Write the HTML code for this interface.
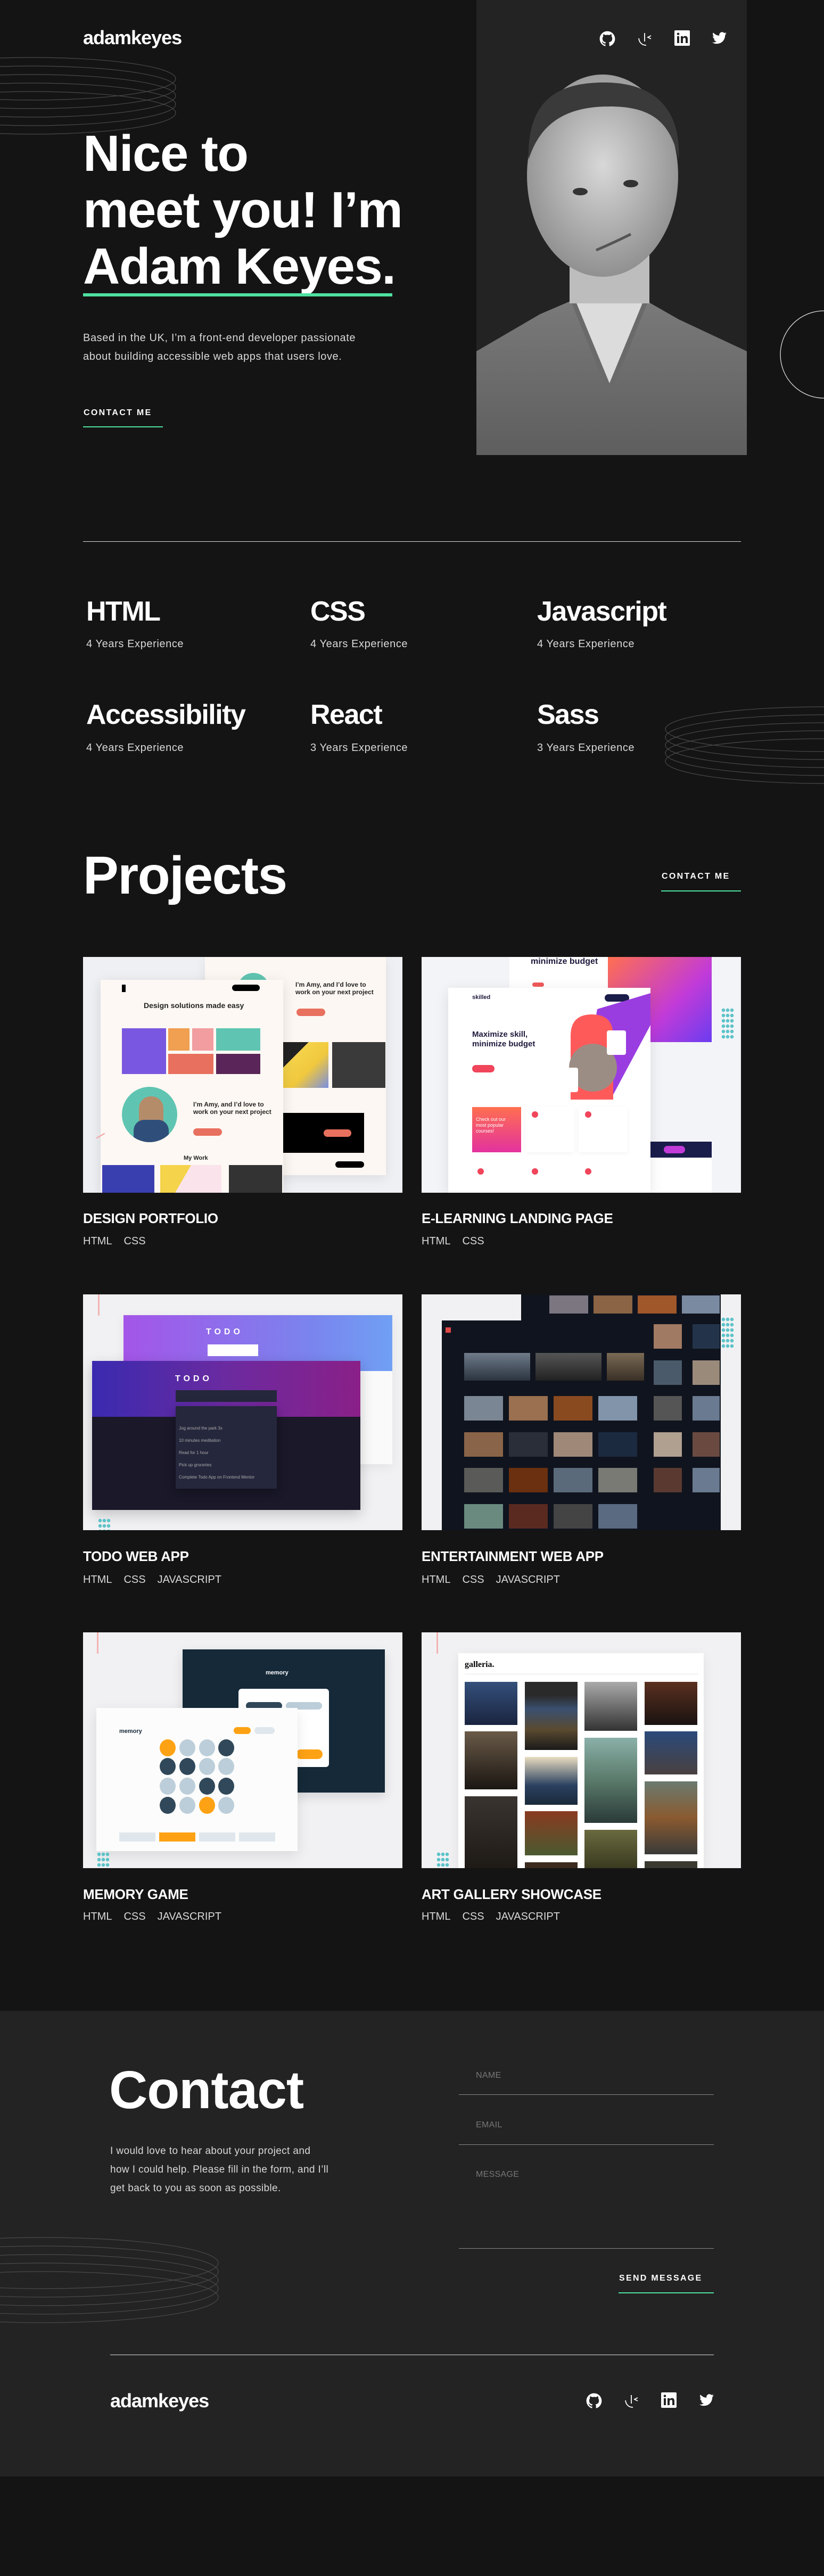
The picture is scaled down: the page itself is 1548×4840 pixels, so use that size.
<!DOCTYPE html>
<html><head><meta charset="utf-8">
<style>
*{margin:0;padding:0;box-sizing:border-box}
html,body{width:1548px;height:4840px;background:#141414;overflow:hidden}
body{font-family:"Liberation Sans",Arial,sans-serif;color:#fff;position:relative}
.a{position:absolute}
.logo{font-weight:700;font-size:36px;letter-spacing:-1px;line-height:1}
.h1{font-weight:700;font-size:96px;line-height:106px;letter-spacing:-1.5px}
.p{font-size:20px;color:#d9d9d9;letter-spacing:.6px}
.cta{font-weight:700;font-size:16px;letter-spacing:2.3px;line-height:1}
.line{height:2px;background:#4ee1a0}
.sk{font-weight:700;font-size:52px;letter-spacing:-1.5px;line-height:1}
.sub{font-size:20px;color:#d9d9d9;letter-spacing:.6px;line-height:1}
.card{position:absolute;width:600px;height:443px;overflow:hidden;background:#eff0f3}
.ct{font-weight:700;font-size:26px;letter-spacing:-.3px;line-height:1}
.tags{font-size:20px;color:#d9d9d9;line-height:1;word-spacing:0}
.tags span{margin-right:22px}
.lbl{font-size:16px;color:#777;letter-spacing:.3px}
.fl{height:1px;background:#888;width:479px;left:862px}
</style></head><body>

<!-- HERO -->
<div class="a" style="left:895px;top:0;width:508px;height:855px;background:#232323;overflow:hidden">
<svg width="508" height="855" viewBox="0 0 508 855">
<defs>
<radialGradient id="face" cx="50%" cy="45%" r="60%"><stop offset="0" stop-color="#d8d8d8"/><stop offset="1" stop-color="#8a8a8a"/></radialGradient>
<linearGradient id="shirt" x1="0" y1="0" x2="0" y2="1"><stop offset="0" stop-color="#7a7a7a"/><stop offset="1" stop-color="#5e5e5e"/></linearGradient>
</defs>
<path d="M0 660 L120 590 L190 560 L310 560 L380 600 L508 660 L508 855 L0 855Z" fill="url(#shirt)"/>
<path d="M180 560 L250 740 L320 560 L300 540 L200 540Z" fill="#dcdcdc"/>
<path d="M175 560 L250 745 L325 560 L318 555 L250 720 L182 555Z" fill="#6a6a6a"/>
<rect x="175" y="440" width="150" height="130" fill="#bdbdbd"/>
<ellipse cx="237" cy="330" rx="142" ry="190" fill="url(#face)"/>
<path d="M98 300 C95 190 150 155 240 155 C330 155 385 200 380 300 C365 230 330 200 250 200 C170 200 120 230 98 300Z" fill="#3a3a3a"/>
<ellipse cx="195" cy="360" rx="14" ry="7" fill="#333"/>
<ellipse cx="290" cy="345" rx="14" ry="7" fill="#333"/>
<path d="M225 470 Q260 455 290 440" stroke="#555" stroke-width="5" fill="none"/>
</svg>
</div>

<div class="a logo" style="left:156px;top:53px">adamkeyes</div>

<!-- icons hero -->
<svg class="a" style="left:1126px;top:58px" width="30" height="30" viewBox="0 0 24 24"><path fill="#fff" d="M12 .5C5.65.5.5 5.65.5 12c0 5.08 3.29 9.39 7.86 10.91.58.1.79-.25.79-.56v-2c-3.2.7-3.87-1.54-3.87-1.54-.52-1.33-1.28-1.68-1.28-1.68-1.04-.71.08-.7.08-.7 1.15.08 1.76 1.19 1.76 1.19 1.03 1.76 2.7 1.25 3.36.96.1-.75.4-1.25.73-1.54-2.55-.29-5.24-1.28-5.24-5.69 0-1.26.45-2.28 1.19-3.09-.12-.29-.52-1.46.11-3.05 0 0 .97-.31 3.17 1.18a11 11 0 0 1 5.77 0c2.2-1.49 3.17-1.18 3.17-1.18.63 1.59.23 2.76.11 3.05.74.81 1.19 1.83 1.19 3.09 0 4.42-2.69 5.39-5.26 5.68.41.36.78 1.06.78 2.14v3.17c0 .31.21.67.8.56C20.21 21.39 23.5 17.08 23.5 12 23.5 5.65 18.35.5 12 .5z"/></svg>
<svg class="a" style="left:1197px;top:58px" width="30" height="30" viewBox="0 0 30 30"><g stroke="#fff" stroke-width="1.8" fill="none"><path d="M14 4V20"/><path d="M26 9L20 12L26 15"/><path d="M3 14C4 22 9 27 17 27"/></g></svg>
<svg class="a" style="left:1267px;top:57px" width="29" height="29" viewBox="0 0 29 29"><rect width="29" height="29" rx="2" fill="#fff"/><rect x="5" y="11" width="4" height="13" fill="#232323"/><circle cx="7" cy="6.8" r="2.3" fill="#232323"/><path d="M12 11h4v2c1-1.6 2.5-2.4 4.4-2.4 3.2 0 4.6 2 4.6 5.6V24h-4v-7c0-1.8-.6-2.9-2.2-2.9-1.7 0-2.8 1.1-2.8 3V24h-4z" fill="#232323"/></svg>
<svg class="a" style="left:1338px;top:60px" width="27" height="23" viewBox="0 0 24 20"><path fill="#fff" d="M24 2.4a9.8 9.8 0 0 1-2.8.8A4.9 4.9 0 0 0 23.3.4a9.8 9.8 0 0 1-3.1 1.2A4.9 4.9 0 0 0 11.8 6 14 14 0 0 1 1.7.9a4.9 4.9 0 0 0 1.5 6.6 4.9 4.9 0 0 1-2.2-.6v.1a4.9 4.9 0 0 0 3.9 4.8 4.9 4.9 0 0 1-2.2.1 4.9 4.9 0 0 0 4.6 3.4A9.9 9.9 0 0 1 0 17.3 13.9 13.9 0 0 0 7.5 19.5c9.1 0 14-7.5 14-14v-.6A10 10 0 0 0 24 2.4z"/></svg>

<!-- rings -->
<svg class="a" style="left:0;top:100px" width="340" height="180" viewBox="0 0 340 180"><g fill="none" stroke="#4a4a4a" stroke-width="1.2">
<ellipse cx="60" cy="48" rx="270" ry="40"/><ellipse cx="60" cy="64" rx="270" ry="40"/><ellipse cx="60" cy="80" rx="270" ry="40"/><ellipse cx="60" cy="96" rx="270" ry="40"/><ellipse cx="60" cy="112" rx="270" ry="40"/></g></svg>
<svg class="a" style="left:1460px;top:580px" width="88" height="172"><ellipse cx="88" cy="86" rx="82" ry="82" fill="none" stroke="#ddd" stroke-width="1.3"/></svg>

<div class="a h1" style="left:156px;top:236px">Nice to<br>meet you! I’m<br>Adam Keyes.</div>
<div class="a" style="left:156px;top:551px;width:581px;height:6px;background:#4ee1a0"></div>
<div class="a p" style="left:156px;top:618px;line-height:35px">Based in the UK, I’m a front-end developer passionate<br>about building accessible web apps that users love.</div>
<div class="a cta" style="left:157px;top:768px">CONTACT ME</div>
<div class="a line" style="left:156px;top:801px;width:150px"></div>

<!-- divider + skills -->
<div class="a" style="left:156px;top:1017px;width:1236px;height:1px;background:#ddd"></div>
<div class="a sk" style="left:162px;top:1123px">HTML</div>
<div class="a sub" style="left:162px;top:1200px">4 Years Experience</div>
<div class="a sk" style="left:583px;top:1123px">CSS</div>
<div class="a sub" style="left:583px;top:1200px">4 Years Experience</div>
<div class="a sk" style="left:1009px;top:1123px">Javascript</div>
<div class="a sub" style="left:1009px;top:1200px">4 Years Experience</div>
<div class="a sk" style="left:162px;top:1317px">Accessibility</div>
<div class="a sub" style="left:162px;top:1395px">4 Years Experience</div>
<div class="a sk" style="left:583px;top:1317px">React</div>
<div class="a sub" style="left:583px;top:1395px">3 Years Experience</div>
<div class="a sk" style="left:1009px;top:1317px">Sass</div>
<div class="a sub" style="left:1009px;top:1395px">3 Years Experience</div>
<svg class="a" style="left:1230px;top:1320px" width="318" height="175"><g fill="none" stroke="#4a4a4a" stroke-width="1.2">
<ellipse cx="320" cy="50" rx="300" ry="42"/><ellipse cx="320" cy="65" rx="300" ry="42"/><ellipse cx="320" cy="80" rx="300" ry="42"/><ellipse cx="320" cy="95" rx="300" ry="42"/><ellipse cx="320" cy="110" rx="300" ry="42"/></g></svg>

<!-- projects header -->
<div class="a" style="left:156px;top:1595px;font-weight:700;font-size:100px;letter-spacing:-1.5px;line-height:1">Projects</div>
<div class="a cta" style="left:1243px;top:1639px">CONTACT ME</div>
<div class="a line" style="left:1242px;top:1673px;width:150px"></div>

<!-- CARD 1 design portfolio -->
<div class="card" style="left:156px;top:1798px">
 <div class="a" style="left:229px;top:0;width:340px;height:410px;background:#fcf7f2;box-shadow:0 6px 20px rgba(0,0,0,.08)"></div>
 <div class="a" style="left:290px;top:30px;width:60px;height:40px;border-radius:30px 30px 0 0;background:#5fc5b2"></div>
 <div class="a" style="left:399px;top:45px;font-size:12px;color:#222;font-weight:700;line-height:14px">I’m Amy, and I’d love to<br>work on your next project</div>
 <div class="a" style="left:401px;top:97px;width:54px;height:14px;border-radius:7px;background:#e8705e"></div>
 <div class="a" style="left:371px;top:160px;width:90px;height:86px;background:linear-gradient(135deg,#222 30%,#f5d34a 30%,#f0c83e 60%,#7a8ee0)"></div>
 <div class="a" style="left:468px;top:160px;width:100px;height:86px;background:#3a3a3a"></div>
 <div class="a" style="left:371px;top:293px;width:157px;height:75px;background:#000"></div>
 <div class="a" style="left:452px;top:324px;width:52px;height:14px;border-radius:7px;background:#e8705e"></div>
 <div class="a" style="left:474px;top:384px;width:54px;height:12px;border-radius:6px;background:#000"></div>
 <div class="a" style="left:33px;top:43px;width:343px;height:400px;background:#fdf8f3;box-shadow:0 6px 24px rgba(0,0,0,.12)"></div>
 <div class="a" style="left:73px;top:52px;width:7px;height:14px;background:#000"></div>
 <div class="a" style="left:280px;top:52px;width:52px;height:12px;border-radius:6px;background:#000"></div>
 <div class="a" style="left:114px;top:83px;font-size:14px;font-weight:700;color:#222">Design solutions made easy</div>
 <div class="a" style="left:73px;top:134px;width:83px;height:86px;background:#7a57e0"></div>
 <div class="a" style="left:160px;top:134px;width:40px;height:42px;background:#f0a050"></div>
 <div class="a" style="left:205px;top:134px;width:40px;height:42px;background:#f29da0"></div>
 <div class="a" style="left:250px;top:134px;width:83px;height:42px;background:#5fc5b2"></div>
 <div class="a" style="left:160px;top:182px;width:85px;height:38px;background:#e8705e"></div>
 <div class="a" style="left:250px;top:182px;width:83px;height:38px;background:#5a2558"></div>
 <div class="a" style="left:73px;top:244px;width:104px;height:104px;border-radius:50%;background:#5fc5b2;overflow:hidden"><div class="a" style="left:32px;top:18px;width:46px;height:90px;border-radius:22px 22px 0 0;background:#b58c6a"></div><div class="a" style="left:22px;top:62px;width:66px;height:50px;background:#2f4f7a;border-radius:20px 20px 0 0"></div></div>
 <div class="a" style="left:207px;top:270px;font-size:12px;color:#222;font-weight:700;line-height:14px">I’m Amy, and I’d love to<br>work on your next project</div>
 <div class="a" style="left:207px;top:322px;width:54px;height:14px;border-radius:7px;background:#e8705e"></div>
 <div class="a" style="left:189px;top:372px;font-size:11px;font-weight:700;color:#222">My Work</div>
 <div class="a" style="left:36px;top:391px;width:98px;height:52px;background:#3a3fb0"></div>
 <div class="a" style="left:145px;top:391px;width:115px;height:52px;background:linear-gradient(120deg,#f5d34a 40%,#fbe3ec 40%)"></div>
 <div class="a" style="left:274px;top:391px;width:100px;height:52px;background:#333"></div>
 <div class="a" style="left:24px;top:335px;width:18px;height:2px;background:#f3a1a0;transform:rotate(-30deg)"></div>
</div>

<!-- CARD 2 e-learning -->
<div class="card" style="left:792px;top:1798px;background:#f3f4f7">
 <div class="a" style="left:165px;top:0;width:380px;height:60px;background:#fff"></div>
 <div class="a" style="left:205px;top:0;font-size:16px;font-weight:700;color:#1e1a3c">minimize budget</div>
 <div class="a" style="left:208px;top:48px;width:22px;height:8px;background:#f05a5a;border-radius:4px"></div>
 <div class="a" style="left:350px;top:0;width:195px;height:160px;background:linear-gradient(135deg,#ff6f4f,#c23bd8 60%,#6b3cf0)"></div>
 <div class="a" style="left:424px;top:360px;width:121px;height:83px;background:#fff"></div>
 <div class="a" style="left:424px;top:347px;width:121px;height:30px;background:#1a1c4a"></div>
 <div class="a" style="left:455px;top:355px;width:40px;height:14px;border-radius:7px;background:#c23bd8"></div>
 <div class="a" style="left:50px;top:58px;width:380px;height:385px;background:#fff;box-shadow:0 6px 24px rgba(0,0,0,.1)"></div>
 <div class="a" style="left:95px;top:70px;font-size:11px;font-weight:700;color:#1e1a3c">skilled</div>
 <div class="a" style="left:344px;top:70px;width:46px;height:14px;border-radius:7px;background:#1a1c4a"></div>
 <svg class="a" style="left:260px;top:68px" width="170" height="200"><path d="M70 30 L170 0 L170 60 L95 200 L40 200Z" fill="#9a3de0"/><path d="M20 80 Q20 40 60 40 Q100 40 100 80 L100 200 L20 200Z" fill="#ff5a5a"/><circle cx="62" cy="140" r="45" fill="#9c8d84"/><rect x="88" y="70" width="36" height="46" rx="4" fill="#fff"/><rect x="-16" y="140" width="50" height="46" rx="4" fill="#fff"/></svg>
 <div class="a" style="left:95px;top:137px;font-size:15px;font-weight:700;color:#1e1a3c;line-height:18px">Maximize skill,<br>minimize budget</div>
 <div class="a" style="left:95px;top:203px;width:42px;height:14px;border-radius:7px;background:#f0455a"></div>
 <div class="a" style="left:95px;top:282px;width:92px;height:85px;background:linear-gradient(180deg,#ff6f4f,#e3329f)"></div>
 <div class="a" style="left:102px;top:300px;font-size:9px;color:#fff;line-height:11px">Check out our<br>most popular<br>courses!</div>
 <div class="a" style="left:195px;top:282px;width:92px;height:85px;background:#fff;box-shadow:0 2px 8px rgba(0,0,0,.05)"></div>
 <div class="a" style="left:295px;top:282px;width:92px;height:85px;background:#fff;box-shadow:0 2px 8px rgba(0,0,0,.05)"></div>
 <div class="a" style="left:207px;top:290px;width:12px;height:12px;border-radius:50%;background:#f0455a"></div>
 <div class="a" style="left:307px;top:290px;width:12px;height:12px;border-radius:50%;background:#f0455a"></div>
 <div class="a" style="left:105px;top:397px;width:12px;height:12px;border-radius:50%;background:#f0455a"></div>
 <div class="a" style="left:207px;top:397px;width:12px;height:12px;border-radius:50%;background:#f0455a"></div>
 <div class="a" style="left:307px;top:397px;width:12px;height:12px;border-radius:50%;background:#f0455a"></div>
 <div class="a" style="left:563px;top:95px;width:24px;height:60px;background:radial-gradient(circle,#5cc3c9 3px,transparent 3.5px) 0 0/8px 10px"></div>
</div>

<!-- CARD 3 todo -->
<div class="card" style="left:156px;top:2432px;background:#f1f1f3">
 <div class="a" style="left:76px;top:39px;width:505px;height:280px;background:#fafafa;box-shadow:0 6px 20px rgba(0,0,0,.06)"></div>
 <div class="a" style="left:76px;top:39px;width:505px;height:105px;background:linear-gradient(90deg,#a455e8,#7a84ee 70%,#70a0f4)"></div>
 <div class="a" style="left:231px;top:62px;font-size:16px;font-weight:700;letter-spacing:6px;color:#fff">TODO</div>
 <div class="a" style="left:234px;top:94px;width:95px;height:22px;background:#fff"></div>
 <div class="a" style="left:17px;top:125px;width:504px;height:280px;background:#1a1829;box-shadow:0 8px 24px rgba(0,0,0,.2)"></div>
 <div class="a" style="left:17px;top:125px;width:504px;height:105px;background:linear-gradient(90deg,#3a2ab0,#6b2aa0 50%,#8a2088)"></div>
 <div class="a" style="left:173px;top:150px;font-size:16px;font-weight:700;letter-spacing:6px;color:#fff">TODO</div>
 <div class="a" style="left:174px;top:180px;width:190px;height:22px;background:#25273c"></div>
 <div class="a" style="left:174px;top:210px;width:190px;height:155px;background:#25273c;box-shadow:0 6px 18px rgba(0,0,0,.3)"></div>
 <div class="a" style="left:180px;top:240px;font-size:8px;color:#aaa;line-height:23px">Jog around the park 3x<br>10 minutes meditation<br>Read for 1 hour<br>Pick up groceries<br>Complete Todo App on Frontend Mentor</div>
 <div class="a" style="left:28px;top:420px;width:24px;height:30px;background:radial-gradient(circle,#5cc3c9 3px,transparent 3.5px) 0 0/8px 10px"></div>
 <div class="a" style="left:28px;top:0;width:3px;height:40px;background:#f3b4b4"></div>
</div>

<!-- CARD 4 entertainment -->
<div class="card" style="left:792px;top:2432px;background:#f1f1f3">
 <div class="a" style="left:187px;top:0;width:375px;height:60px;background:#10141e"></div>
 <div class="a" style="left:38px;top:49px;width:524px;height:394px;background:#10141e"></div>
 <div class="a" style="left:45px;top:62px;width:10px;height:10px;background:#e04848"></div>
 <div class="a" style="left:80px;top:110px;width:124px;height:52px;background:linear-gradient(#6f7b8a,#2b3440)"></div>
 <div class="a" style="left:214px;top:110px;width:124px;height:52px;background:linear-gradient(#555,#222)"></div>
 <div class="a" style="left:348px;top:110px;width:70px;height:52px;background:linear-gradient(#7a6a55,#3a3026)"></div>
 <svg class="a" style="left:80px;top:0" width="480" height="443">
  <g fill="#6a6660"><rect x="160" y="2" width="73" height="34" fill="#7b7680"/><rect x="243" y="2" width="73" height="34" fill="#8a6444"/><rect x="326" y="2" width="73" height="34" fill="#a0572a"/><rect x="409" y="2" width="73" height="34" fill="#7a8aa0"/>
  <rect x="356" y="56" width="53" height="46" fill="#a07a62"/><rect x="429" y="56" width="53" height="46" fill="#23344a"/>
  <rect x="356" y="124" width="53" height="46" fill="#4a5a6a"/><rect x="429" y="124" width="53" height="46" fill="#9a8a7a"/>
  <rect x="0" y="191" width="73" height="46" fill="#7a8694"/><rect x="84" y="191" width="73" height="46" fill="#9a7050"/><rect x="168" y="191" width="73" height="46" fill="#8a4a20"/><rect x="252" y="191" width="73" height="46" fill="#8294aa"/><rect x="356" y="191" width="53" height="46" fill="#555"/><rect x="429" y="191" width="53" height="46" fill="#6a7a90"/>
  <rect x="0" y="259" width="73" height="46" fill="#8a6448"/><rect x="84" y="259" width="73" height="46" fill="#2a2e38"/><rect x="168" y="259" width="73" height="46" fill="#a08878"/><rect x="252" y="259" width="73" height="46" fill="#1c2a40"/><rect x="356" y="259" width="53" height="46" fill="#b0a090"/><rect x="429" y="259" width="53" height="46" fill="#6a4a40"/>
  <rect x="0" y="326" width="73" height="46" fill="#5a5a58"/><rect x="84" y="326" width="73" height="46" fill="#6a3010"/><rect x="168" y="326" width="73" height="46" fill="#5a6a7a"/><rect x="252" y="326" width="73" height="46" fill="#7a7a74"/><rect x="356" y="326" width="53" height="46" fill="#5a3a30"/><rect x="429" y="326" width="53" height="46" fill="#6a7a90"/>
  <rect x="0" y="394" width="73" height="46" fill="#6a8a80"/><rect x="84" y="394" width="73" height="46" fill="#5a2a20"/><rect x="168" y="394" width="73" height="46" fill="#444"/><rect x="252" y="394" width="73" height="46" fill="#5a6a80"/></g></svg>
 <div class="a" style="left:563px;top:42px;width:24px;height:60px;background:radial-gradient(circle,#5cc3c9 3px,transparent 3.5px) 0 0/8px 10px"></div>
</div>

<!-- CARD 5 memory -->
<div class="card" style="left:156px;top:3067px;background:#f1f1f3">
 <div class="a" style="left:187px;top:32px;width:380px;height:269px;background:#152938;box-shadow:0 8px 20px rgba(0,0,0,.12)"></div>
 <div class="a" style="left:343px;top:70px;font-size:11px;font-weight:700;color:#fff">memory</div>
 <div class="a" style="left:292px;top:106px;width:170px;height:147px;background:#fff;border-radius:6px"></div>
 <div class="a" style="left:306px;top:131px;width:68px;height:14px;border-radius:7px;background:#304859"></div>
 <div class="a" style="left:381px;top:131px;width:68px;height:14px;border-radius:7px;background:#bcced9"></div>
 <div class="a" style="left:400px;top:220px;width:50px;height:18px;border-radius:9px;background:#fda214"></div>
 <div class="a" style="left:25px;top:142px;width:378px;height:269px;background:#fcfcfc;box-shadow:0 8px 24px rgba(0,0,0,.1)"></div>
 <div class="a" style="left:68px;top:180px;font-size:11px;font-weight:700;color:#152938">memory</div>
 <div class="a" style="left:283px;top:178px;width:32px;height:13px;border-radius:7px;background:#fda214"></div>
 <div class="a" style="left:322px;top:178px;width:38px;height:13px;border-radius:7px;background:#dfe7ec"></div>
 <svg class="a" style="left:140px;top:200px" width="150" height="145"><g>
 <ellipse cx="19" cy="17" rx="15" ry="16" fill="#fda214"/><ellipse cx="56" cy="17" rx="15" ry="16" fill="#bcced9"/><ellipse cx="93" cy="17" rx="15" ry="16" fill="#bcced9"/><ellipse cx="129" cy="17" rx="15" ry="16" fill="#304859"/>
 <ellipse cx="19" cy="52" rx="15" ry="16" fill="#304859"/><ellipse cx="56" cy="52" rx="15" ry="16" fill="#304859"/><ellipse cx="93" cy="52" rx="15" ry="16" fill="#bcced9"/><ellipse cx="129" cy="52" rx="15" ry="16" fill="#bcced9"/>
 <ellipse cx="19" cy="89" rx="15" ry="16" fill="#bcced9"/><ellipse cx="56" cy="89" rx="15" ry="16" fill="#bcced9"/><ellipse cx="93" cy="89" rx="15" ry="16" fill="#304859"/><ellipse cx="129" cy="89" rx="15" ry="16" fill="#304859"/>
 <ellipse cx="19" cy="125" rx="15" ry="16" fill="#304859"/><ellipse cx="56" cy="125" rx="15" ry="16" fill="#bcced9"/><ellipse cx="93" cy="125" rx="15" ry="16" fill="#fda214"/><ellipse cx="129" cy="125" rx="15" ry="16" fill="#bcced9"/></g></svg>
 <div class="a" style="left:68px;top:376px;width:68px;height:17px;background:#dfe7ec"></div>
 <div class="a" style="left:143px;top:376px;width:68px;height:17px;background:#fda214"></div>
 <div class="a" style="left:218px;top:376px;width:68px;height:17px;background:#dfe7ec"></div>
 <div class="a" style="left:293px;top:376px;width:68px;height:17px;background:#dfe7ec"></div>
 <div class="a" style="left:26px;top:0;width:3px;height:40px;background:#f3b4b4"></div>
 <div class="a" style="left:26px;top:412px;width:24px;height:31px;background:radial-gradient(circle,#5cc3c9 3px,transparent 3.5px) 0 0/8px 10px"></div>
</div>

<!-- CARD 6 gallery -->
<div class="card" style="left:792px;top:3067px;background:#f1f1f3">
 <div class="a" style="left:69px;top:39px;width:461px;height:404px;background:#fff;box-shadow:0 6px 20px rgba(0,0,0,.08)"></div>
 <div class="a" style="left:81px;top:52px;font-family:'Liberation Serif',serif;font-size:16px;font-weight:700;color:#000">galleria.</div>
 <div class="a" style="left:81px;top:78px;width:440px;height:1px;background:#e5e5e5"></div>
 <div class="a" style="left:81px;top:93px;width:99px;height:81px;background:linear-gradient(#34507a,#1a2440)"></div>
 <div class="a" style="left:81px;top:186px;width:99px;height:109px;background:linear-gradient(#6a5a48,#1a1612)"></div>
 <div class="a" style="left:81px;top:308px;width:99px;height:135px;background:linear-gradient(#3a3430,#1e1a16)"></div>
 <div class="a" style="left:194px;top:93px;width:99px;height:128px;background:linear-gradient(#2a2a2a 20%,#3a5070 40%,#5a4a30 70%,#1a1a1a)"></div>
 <div class="a" style="left:194px;top:234px;width:99px;height:90px;background:linear-gradient(#e8dcc0,#2a4060 60%,#1a2a3a)"></div>
 <div class="a" style="left:194px;top:336px;width:99px;height:83px;background:linear-gradient(#8a3a20,#4a5a30)"></div>
 <div class="a" style="left:194px;top:432px;width:99px;height:11px;background:#3a2a20"></div>
 <div class="a" style="left:306px;top:93px;width:99px;height:92px;background:linear-gradient(#aaa,#333)"></div>
 <div class="a" style="left:306px;top:198px;width:99px;height:160px;background:linear-gradient(#8ab0a8,#5a7a6a 50%,#2a3a38)"></div>
 <div class="a" style="left:306px;top:371px;width:99px;height:72px;background:linear-gradient(#6a6a40,#3a3a20)"></div>
 <div class="a" style="left:419px;top:93px;width:99px;height:81px;background:linear-gradient(#5a3020,#1a1210)"></div>
 <div class="a" style="left:419px;top:186px;width:99px;height:81px;background:linear-gradient(#2a4a7a,#4a4040)"></div>
 <div class="a" style="left:419px;top:280px;width:99px;height:137px;background:linear-gradient(#6a7a70,#8a5a30 50%,#3a3a38)"></div>
 <div class="a" style="left:419px;top:430px;width:99px;height:13px;background:#3a3a30"></div>
 <div class="a" style="left:28px;top:0;width:3px;height:40px;background:#f3b4b4"></div>
 <div class="a" style="left:28px;top:412px;width:24px;height:31px;background:radial-gradient(circle,#5cc3c9 3px,transparent 3.5px) 0 0/8px 10px"></div>
</div>

<!-- card titles -->
<div class="a ct" style="left:156px;top:2276px">DESIGN PORTFOLIO</div>
<div class="a tags" style="left:156px;top:2322px"><span>HTML</span><span>CSS</span></div>
<div class="a ct" style="left:792px;top:2276px">E-LEARNING LANDING PAGE</div>
<div class="a tags" style="left:792px;top:2322px"><span>HTML</span><span>CSS</span></div>
<div class="a ct" style="left:156px;top:2911px">TODO WEB APP</div>
<div class="a tags" style="left:156px;top:2958px"><span>HTML</span><span>CSS</span><span>JAVASCRIPT</span></div>
<div class="a ct" style="left:792px;top:2911px">ENTERTAINMENT WEB APP</div>
<div class="a tags" style="left:792px;top:2958px"><span>HTML</span><span>CSS</span><span>JAVASCRIPT</span></div>
<div class="a ct" style="left:156px;top:3546px">MEMORY GAME</div>
<div class="a tags" style="left:156px;top:3591px"><span>HTML</span><span>CSS</span><span>JAVASCRIPT</span></div>
<div class="a ct" style="left:792px;top:3546px">ART GALLERY SHOWCASE</div>
<div class="a tags" style="left:792px;top:3591px"><span>HTML</span><span>CSS</span><span>JAVASCRIPT</span></div>

<!-- CONTACT -->
<div class="a" style="left:0;top:3778px;width:1548px;height:875px;background:#232323"></div>
<div class="a" style="left:205px;top:3877px;font-weight:700;font-size:100px;letter-spacing:-1px;line-height:1">Contact</div>
<div class="a p" style="left:207px;top:4024px;font-size:19px;line-height:35px;letter-spacing:.4px">I would love to hear about your project and<br>how I could help. Please fill in the form, and I’ll<br>get back to you as soon as possible.</div>
<svg class="a" style="left:0;top:4200px" width="415" height="170"><g fill="none" stroke="#4a4a4a" stroke-width="1.2">
<ellipse cx="80" cy="52" rx="330" ry="48"/><ellipse cx="80" cy="68" rx="330" ry="48"/><ellipse cx="80" cy="84" rx="330" ry="48"/><ellipse cx="80" cy="100" rx="330" ry="48"/><ellipse cx="80" cy="116" rx="330" ry="48"/></g></svg>
<div class="a lbl" style="left:894px;top:3891px">NAME</div>
<div class="a fl" style="top:3935px"></div>
<div class="a lbl" style="left:894px;top:3984px">EMAIL</div>
<div class="a fl" style="top:4029px"></div>
<div class="a lbl" style="left:894px;top:4077px">MESSAGE</div>
<div class="a fl" style="top:4224px"></div>
<div class="a cta" style="left:1163px;top:4273px">SEND MESSAGE</div>
<div class="a line" style="left:1162px;top:4307px;width:179px"></div>
<div class="a" style="left:207px;top:4424px;width:1134px;height:1px;background:#ddd"></div>
<div class="a logo" style="left:207px;top:4493px">adamkeyes</div>

<svg class="a" style="left:1101px;top:4496px" width="30" height="30" viewBox="0 0 24 24"><path fill="#fff" d="M12 .5C5.65.5.5 5.65.5 12c0 5.08 3.29 9.39 7.86 10.91.58.1.79-.25.79-.56v-2c-3.2.7-3.87-1.54-3.87-1.54-.52-1.330-1.28-1.68-1.28-1.68-1.04-.71.08-.7.08-.7 1.15.08 1.76 1.19 1.76 1.19 1.03 1.76 2.7 1.25 3.36.96.1-.75.4-1.25.73-1.54-2.55-.29-5.24-1.28-5.24-5.69 0-1.26.45-2.28 1.19-3.09-.12-.29-.52-1.46.11-3.05 0 0 .97-.31 3.17 1.18a11 11 0 0 1 5.77 0c2.2-1.49 3.17-1.18 3.17-1.18.63 1.59.23 2.76.11 3.05.74.81 1.19 1.83 1.19 3.09 0 4.42-2.69 5.39-5.26 5.68.41.36.78 1.06.78 2.14v3.17c0 .31.21.67.8.56C20.21 21.39 23.5 17.08 23.5 12 23.5 5.65 18.35.5 12 .5z"/></svg>
<svg class="a" style="left:1172px;top:4496px" width="30" height="30" viewBox="0 0 30 30"><g stroke="#fff" stroke-width="1.8" fill="none"><path d="M14 4V20"/><path d="M26 9L20 12L26 15"/><path d="M3 14C4 22 9 27 17 27"/></g></svg>
<svg class="a" style="left:1242px;top:4495px" width="29" height="29" viewBox="0 0 29 29"><rect width="29" height="29" rx="2" fill="#fff"/><rect x="5" y="11" width="4" height="13" fill="#232323"/><circle cx="7" cy="6.8" r="2.3" fill="#232323"/><path d="M12 11h4v2c1-1.6 2.5-2.4 4.4-2.4 3.2 0 4.6 2 4.6 5.6V24h-4v-7c0-1.8-.6-2.9-2.2-2.9-1.7 0-2.8 1.1-2.8 3V24h-4z" fill="#232323"/></svg>
<svg class="a" style="left:1314px;top:4498px" width="27" height="23" viewBox="0 0 24 20"><path fill="#fff" d="M24 2.4a9.8 9.8 0 0 1-2.8.8A4.9 4.9 0 0 0 23.3.4a9.8 9.8 0 0 1-3.1 1.2A4.9 4.9 0 0 0 11.8 6 14 14 0 0 1 1.7.9a4.9 4.9 0 0 0 1.5 6.6 4.9 4.9 0 0 1-2.2-.6v.1a4.9 4.9 0 0 0 3.9 4.8 4.9 4.9 0 0 1-2.2.1 4.9 4.9 0 0 0 4.6 3.4A9.9 9.9 0 0 1 0 17.3 13.9 13.9 0 0 0 7.5 19.5c9.1 0 14-7.5 14-14v-.6A10 10 0 0 0 24 2.4z"/></svg>

</body></html>
